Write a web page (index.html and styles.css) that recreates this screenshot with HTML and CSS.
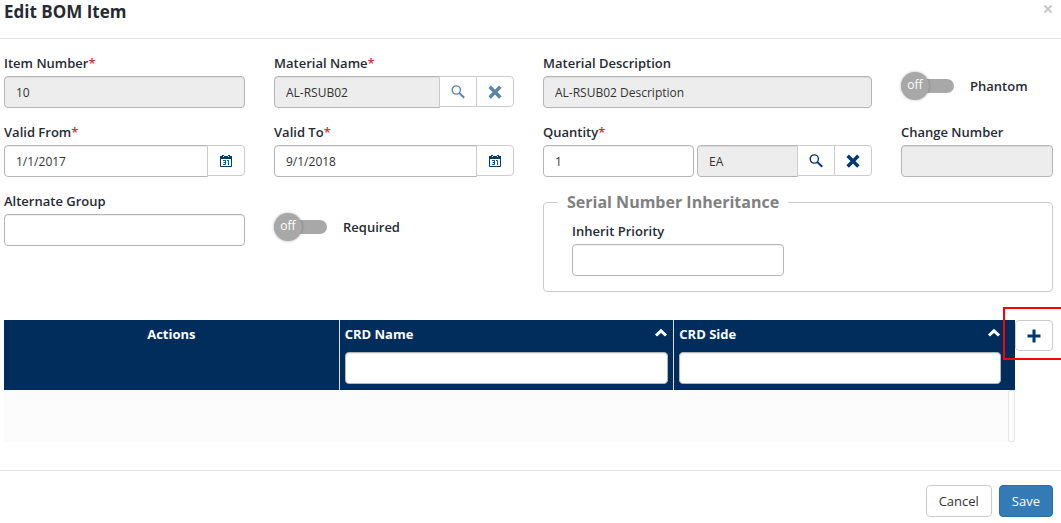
FILE: index.html
```html
<!DOCTYPE html>
<html lang="en">
<head>
<meta charset="utf-8">
<title>Edit BOM Item</title>
<link rel="stylesheet" href="styles.css">
</head>
<body>
<svg class="sprite" aria-hidden="true">
  <symbol id="search" viewBox="0 0 14 14"><circle cx="5.3" cy="5" r="4.1" fill="none" stroke="currentColor" stroke-width="1.4"/><path d="M8.2 8L13.2 12.8" stroke="currentColor" stroke-width="1.9" fill="none"/></symbol>
  <symbol id="cross" viewBox="0 0 14 14"><path d="M2.9 3L11.1 11.2M11.1 3L2.9 11.2" stroke="currentColor" stroke-width="3.5" stroke-linecap="square" fill="none"/></symbol>
  <symbol id="calendar" viewBox="0 0 14 14"><path d="M1.5 2.5h11v10h-11z" fill="#fff" stroke="currentColor"/><path d="M1 2h12v3H1zM3 1h2v2H3zM9 1h2v2H9z" fill="currentColor"/><path d="M4 2.5h1M9 2.5h1" stroke="#fff"/><path d="M4 6.5h2.5v4H4M4.5 8.5h2M8 6.5h1.5V11" fill="none" stroke="currentColor" stroke-width=".9"/></symbol>
  <symbol id="chevron" viewBox="0 0 14 10"><path d="M2 7.5L7 2.8L12 7.5" fill="none" stroke="currentColor" stroke-width="3"/></symbol>
  <symbol id="plus" viewBox="0 0 14 14"><path d="M7 .5v13M.5 7h13" stroke="currentColor" stroke-width="3" fill="none"/></symbol>
  <symbol id="close" viewBox="0 0 10 10"><path d="M1.5 1.5l7 7M8.5 1.5l-7 7" stroke="currentColor" stroke-width="2" fill="none"/></symbol>
</svg>
<form class="modal">
  <header class="modal-header">
    <h1 class="title">Edit BOM Item</h1>
    <button class="close" type="button" aria-label="Close"><svg class="close-icon"><use href="#close"/></svg></button>
  </header>
  <main class="modal-body">
    <div class="fields">
      <div class="field">
        <label for="item">Item Number<span class="req">*</span></label>
        <input class="control" id="item" type="text" value="10" readonly>
      </div>
      <div class="field">
        <label for="material">Material Name<span class="req">*</span></label>
        <div class="group">
          <input class="control" id="material" type="text" value="AL-RSUB02" readonly>
          <button class="addon muted" type="button" aria-label="Search material"><svg class="icon"><use href="#search"/></svg></button>
          <button class="addon muted" type="button" aria-label="Clear material"><svg class="icon"><use href="#cross"/></svg></button>
        </div>
      </div>
      <div class="field">
        <label for="description">Material Description</label>
        <input class="control" id="description" type="text" value="AL-RSUB02 Description" readonly>
      </div>
      <label class="switch">
        <input class="switch-input" type="checkbox">
        <span class="switch-track"><span class="knob">off</span></span>
        Phantom
      </label>
      <div class="field">
        <label for="from">Valid From<span class="req">*</span></label>
        <div class="group">
          <input class="control" id="from" type="text" value="1/1/2017">
          <button class="addon" type="button" aria-label="Pick start date"><svg class="icon"><use href="#calendar"/></svg></button>
        </div>
      </div>
      <div class="field">
        <label for="to">Valid To<span class="req">*</span></label>
        <div class="group">
          <input class="control" id="to" type="text" value="9/1/2018">
          <button class="addon" type="button" aria-label="Pick end date"><svg class="icon"><use href="#calendar"/></svg></button>
        </div>
      </div>
      <div class="field">
        <label for="quantity">Quantity<span class="req">*</span></label>
        <div class="quantity">
          <input class="control" id="quantity" type="text" value="1">
          <div class="group">
            <input class="control" type="text" value="EA" aria-label="Unit" readonly>
            <button class="addon" type="button" aria-label="Search unit"><svg class="icon"><use href="#search"/></svg></button>
            <button class="addon" type="button" aria-label="Clear unit"><svg class="icon"><use href="#cross"/></svg></button>
          </div>
        </div>
      </div>
      <div class="field">
        <label for="change">Change Number</label>
        <input class="control" id="change" type="text" readonly>
      </div>
      <div class="field">
        <label for="alternate">Alternate Group</label>
        <input class="control" id="alternate" type="text">
      </div>
      <label class="switch switch-low">
        <input class="switch-input" type="checkbox">
        <span class="switch-track"><span class="knob">off</span></span>
        Required
      </label>
      <fieldset class="panel">
        <legend>Serial Number Inheritance</legend>
        <div class="field panel-field">
          <label for="priority">Inherit Priority</label>
          <input class="control" id="priority" type="text">
        </div>
      </fieldset>
    </div>
    <div class="grid-row">
      <div class="grid-wrap">
        <table class="grid">
          <colgroup><col><col><col><col class="scroll-col"></colgroup>
          <thead>
            <tr>
              <th class="center" scope="col">Actions</th>
              <th scope="col">
                <div class="head"><label for="crd-name">CRD Name</label><svg class="sort"><use href="#chevron"/></svg></div>
                <input class="control" id="crd-name" type="text">
              </th>
              <th class="last" scope="col" colspan="2">
                <div class="head"><label for="crd-side">CRD Side</label><svg class="sort"><use href="#chevron"/></svg></div>
                <input class="control" id="crd-side" type="text">
              </th>
            </tr>
          </thead>
          <tbody>
            <tr><td></td><td></td><td></td><td class="scroll-track"></td></tr>
          </tbody>
        </table>
      </div>
      <div class="add">
        <button class="add-button" type="button" aria-label="Add row"><svg class="icon"><use href="#plus"/></svg></button>
        <span class="highlight"></span>
      </div>
    </div>
  </main>
  <footer class="modal-footer">
    <button class="button" type="button">Cancel</button>
    <button class="button primary" type="submit">Save</button>
  </footer>
</form>
</body>
</html>
```
FILE: styles.css
```css
* { box-sizing: border-box; }
body {
  margin: 0;
  background: #fff;
  color: #262a33;
  font: 600 13px/18px "Open Sans", sans-serif;
  overflow-x: hidden;
}
button, input { font: inherit; }
.sprite { display: none; }
.modal-header {
  display: flex;
  justify-content: space-between;
  align-items: flex-start;
  height: 39px;
  padding: 0 8px 0 4px;
  border-bottom: 1px solid #e5e5e5;
}
.title { margin: 0; font-size: 17px; line-height: 24px; font-weight: 700; }
.close {
  display: flex;
  padding: 4px 0;
  border: 0;
  background: none;
  color: #c8c8c8;
}
.close-icon { width: 10px; height: 10px; }
.modal-body { padding: 15px 8px 28px 4px; }
.fields {
  display: grid;
  grid-template-columns: 241fr 240fr 329fr 152fr;
  gap: 15px 29px;
  align-items: start;
}
.field { display: grid; gap: 4px; min-width: 0; }
.req { color: #c0393b; }
.control {
  width: 100%;
  min-width: 0;
  height: 32px;
  padding: 0 11px;
  border: 1px solid #b3b6b9;
  border-radius: 4px;
  background: #fff;
  box-shadow: inset 0 1px 1px rgba(0, 0, 0, .075);
  color: #333;
  font-size: 12px;
  font-weight: 400;
}
.control[readonly] { background: #ededed; }
.group { display: flex; align-items: flex-start; min-width: 0; }
.group .control { flex: 1; border-radius: 4px 0 0 4px; }
.addon {
  display: flex;
  flex: none;
  align-items: center;
  justify-content: center;
  width: 38px;
  height: 31px;
  margin-left: -1px;
  padding: 0;
  border: 1px solid #ccc;
  background: #fff;
  color: #003a70;
}
.addon:last-child { border-radius: 0 4px 4px 0; }
.muted { color: #5b84ab; }
.icon { width: 14px; height: 14px; }
.quantity { display: grid; grid-template-columns: 151fr 175fr; gap: 3px; }
.switch { display: flex; align-items: center; gap: 16px; padding-top: 18px; }
.switch-low { padding-top: 21px; }
.switch-input { position: absolute; opacity: 0; }
.switch-track {
  display: flex;
  align-items: center;
  width: 53px;
  height: 14px;
  margin: 7px 0;
  border-radius: 7px;
  background: #a8a8a8;
}
.knob {
  flex: none;
  width: 28px;
  height: 28px;
  border-radius: 50%;
  background: #a8a8a8;
  box-shadow: 0 0 3px rgba(0, 0, 0, .3);
  color: #fff;
  font-size: 12px;
  line-height: 26px;
  font-weight: 400;
  text-align: center;
}
.panel {
  grid-column: span 2;
  min-width: 0;
  margin: 0;
  padding: 10px 14px 15px;
  border: 1px solid #ccc;
  border-radius: 4px;
}
.panel legend { padding: 0 9px; color: #808080; font-size: 16px; line-height: 20px; font-weight: 700; }
.panel-field { width: 47%; padding-left: 14px; }
.grid-row { display: flex; align-items: flex-start; margin-top: 28px; }
.grid-wrap { flex: 1; }
.grid { width: 100%; border-spacing: 0; table-layout: fixed; }
.scroll-col { width: 7px; }
.grid th {
  height: 70px;
  padding: 5px 5px 6px;
  background: #002d5c;
  color: #fff;
  font-weight: 700;
  text-align: left;
  vertical-align: top;
}
.grid th + th { border-left: 1px solid #ddd; }
.grid .center { text-align: center; }
.grid .last { padding-right: 14px; }
.head { display: flex; justify-content: space-between; margin-bottom: 9px; }
.sort { width: 14px; height: 10px; margin-top: 3px; }
.grid td { height: 52px; padding: 0; background: #fcfcfc; }
.grid .scroll-track { border: 1px solid #e6e6e6; border-radius: 2px; }
.add { position: relative; }
.add-button {
  display: flex;
  align-items: center;
  justify-content: center;
  width: 38px;
  height: 31px;
  padding: 0;
  border: 1px solid #ccc;
  border-radius: 4px;
  background: #fff;
  color: #003a70;
}
.highlight {
  position: absolute;
  inset: -13px -8px -9px -12px;
  border: 2px solid #f00;
  border-right: 0;
  pointer-events: none;
}
.modal-footer {
  display: flex;
  justify-content: flex-end;
  gap: 7px;
  padding: 14px 8px 6px;
  border-top: 1px solid #e5e5e5;
}
.button {
  height: 32px;
  padding: 0 12px;
  border: 1px solid #ccc;
  border-radius: 4px;
  background: #fff;
  color: #333;
  font-weight: 400;
}
.primary { border-color: #2e6da4; background: #337ab7; color: #fff; }
```
